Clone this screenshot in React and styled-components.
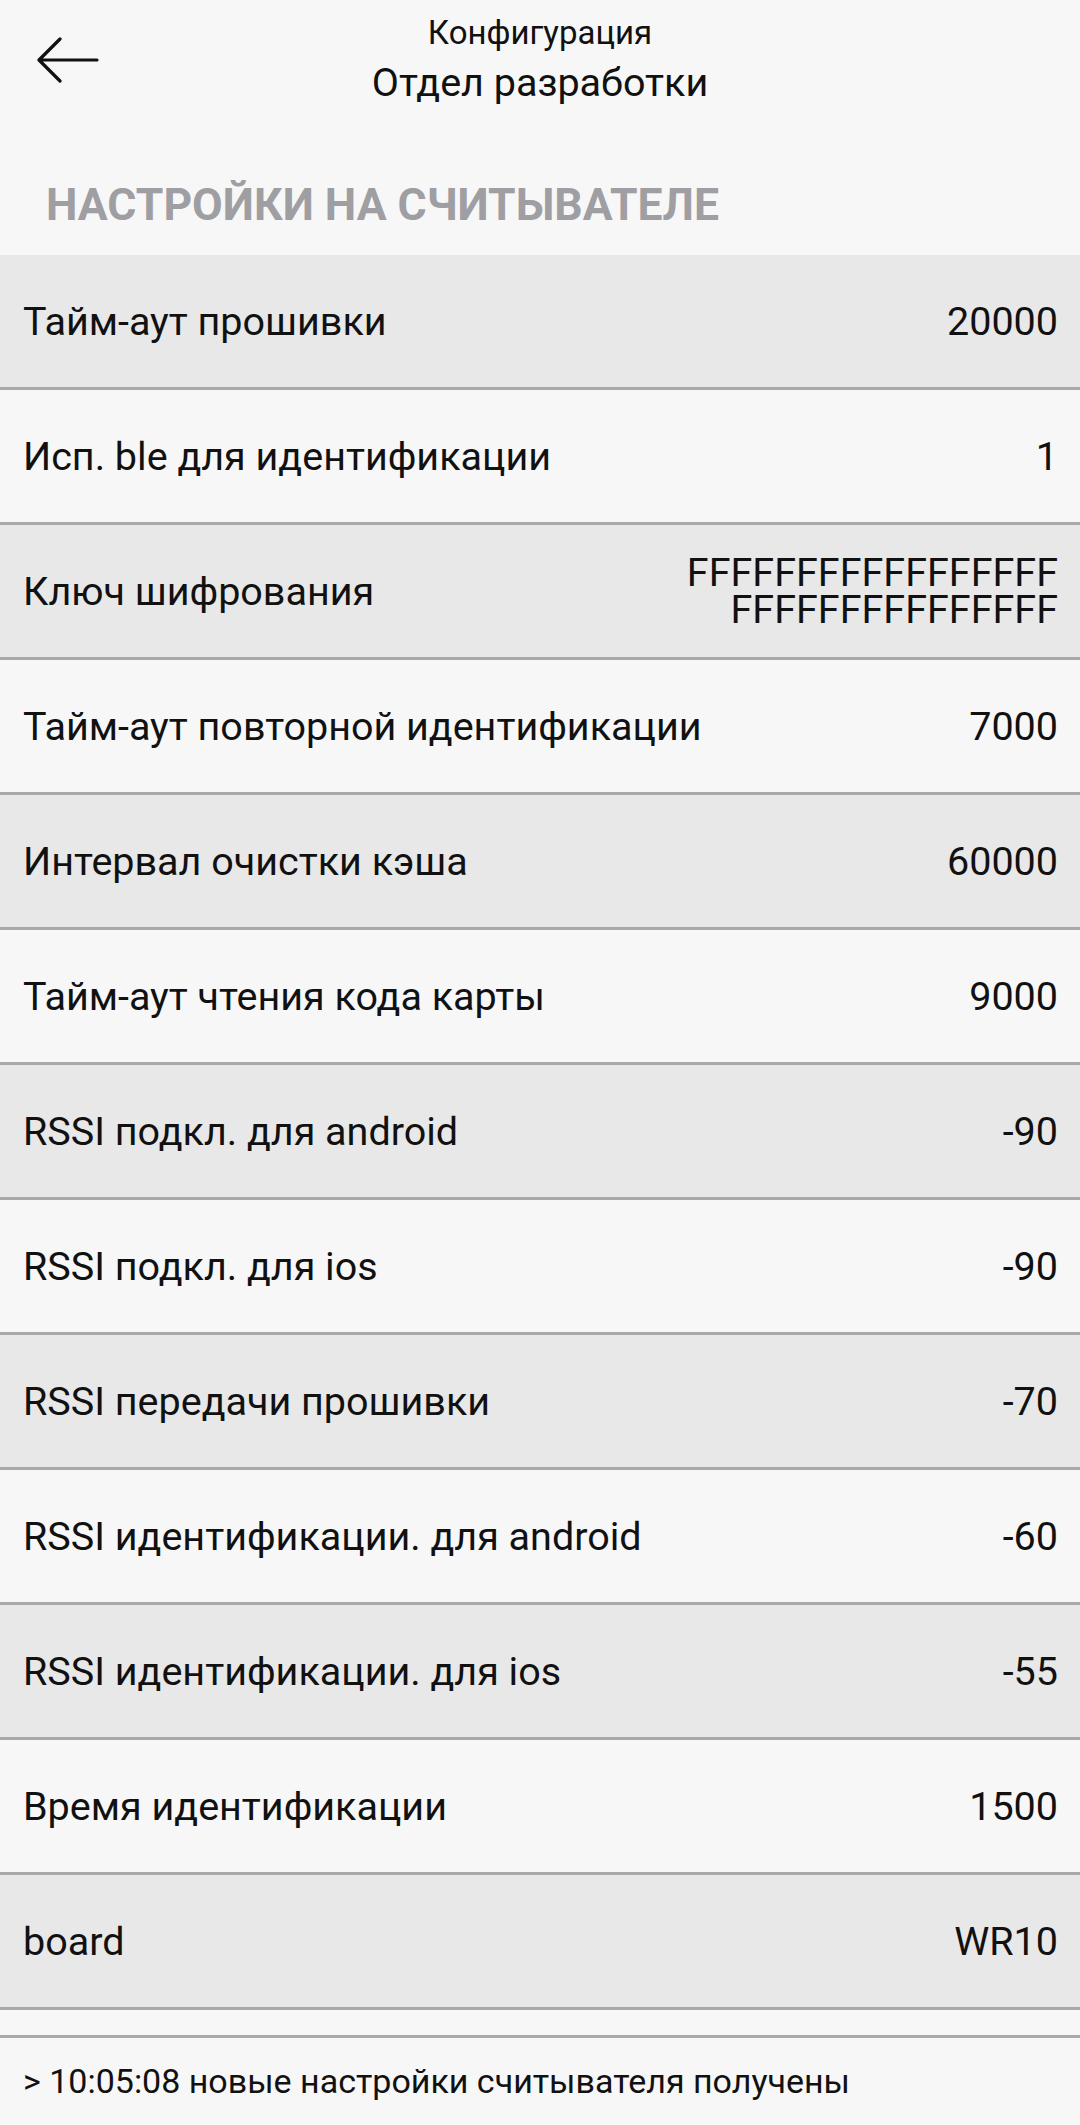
import React from "react";
import styled, { createGlobalStyle } from "styled-components";

const GlobalStyle = createGlobalStyle`
  html, body {
    margin: 0;
    padding: 0;
    background: #f7f7f7;
  }
  body {
    font-family: Roboto, "Noto Sans", "Liberation Sans", sans-serif;
    color: #111;
  }
`;

const Page = styled.div`
  width: 1080px;
  min-height: 2125px;
  background: #f7f7f7;
  display: flex;
  flex-direction: column;
`;

const Header = styled.div`
  display: grid;
  grid-template-columns: 130px 1fr 130px;
  align-items: center;
  padding-top: 14px;
  height: 91px;
`;

const BackButton = styled.button`
  border: none;
  background: none;
  padding: 0;
  margin-left: 37px;
  width: 62px;
  height: 46px;
  display: flex;
  align-items: center;
  cursor: pointer;
`;

const Titles = styled.div`
  display: flex;
  flex-direction: column;
  align-items: center;
  gap: 8px;
  align-self: start;
`;

const SubTitle = styled.div`
  font-size: 33px;
  line-height: 38px;
  color: #111;
`;

const Title = styled.div`
  font-size: 39.5px;
  line-height: 46px;
  color: #111;
`;

const SectionTitle = styled.h2`
  margin: 0;
  padding: 74px 0 24px 46px;
  font-size: 44.5px;
  line-height: 52px;
  font-weight: 700;
  color: #9e9ea3;
`;

const List = styled.div`
  display: flex;
  flex-direction: column;
`;

const Row = styled.div`
  height: 132px;
  border-bottom: 3px solid #a9a9a9;
  background: ${(p) => (p.$shaded ? "#e8e8e8" : "#f7f7f7")};
  display: flex;
  align-items: center;
  justify-content: space-between;
  padding: 0 22px 0 23px;
`;

const Label = styled.span`
  font-size: 39.5px;
  color: #111;
`;

const Value = styled.span`
  font-size: 39.5px;
  line-height: 37px;
  color: #111;
  text-align: right;
  white-space: pre-line;
`;

const Spacer = styled.div`
  height: 25px;
  border-bottom: 3px solid #a9a9a9;
`;

const Log = styled.div`
  height: 86px;
  display: flex;
  align-items: center;
  padding: 0 23px;
  font-size: 34px;
  color: #111;
`;

const BackArrow = () => (
  <svg width="62" height="46" viewBox="0 0 62 46" fill="none">
    <path
      d="M60 23H3M23 2L2 23L23 44"
      stroke="#111"
      strokeWidth="3.2"
      strokeLinecap="round"
      strokeLinejoin="round"
    />
  </svg>
);

const settings = [
  ["Тайм-аут прошивки", "20000"],
  ["Исп. ble для идентификации", "1"],
  ["Ключ шифрования", "FFFFFFFFFFFFFFFFF\nFFFFFFFFFFFFFFF"],
  ["Тайм-аут повторной идентификации", "7000"],
  ["Интервал очистки кэша", "60000"],
  ["Тайм-аут чтения кода карты", "9000"],
  ["RSSI подкл. для android", "-90"],
  ["RSSI подкл. для ios", "-90"],
  ["RSSI передачи прошивки", "-70"],
  ["RSSI идентификации. для android", "-60"],
  ["RSSI идентификации. для ios", "-55"],
  ["Время идентификации", "1500"],
  ["board", "WR10"],
];

export default function App() {
  return (
    <Page>
      <GlobalStyle />
      <Header>
        <BackButton aria-label="Назад">
          <BackArrow />
        </BackButton>
        <Titles>
          <SubTitle>Конфигурация</SubTitle>
          <Title>Отдел разработки</Title>
        </Titles>
        <div />
      </Header>

      <SectionTitle>НАСТРОЙКИ НА СЧИТЫВАТЕЛЕ</SectionTitle>

      <List>
        {settings.map(([label, value], i) => (
          <Row key={label} $shaded={i % 2 === 0}>
            <Label>{label}</Label>
            <Value>{value}</Value>
          </Row>
        ))}
      </List>

      <Spacer />
      <Log>&gt; 10:05:08 новые настройки считывателя получены</Log>
    </Page>
  );
}
